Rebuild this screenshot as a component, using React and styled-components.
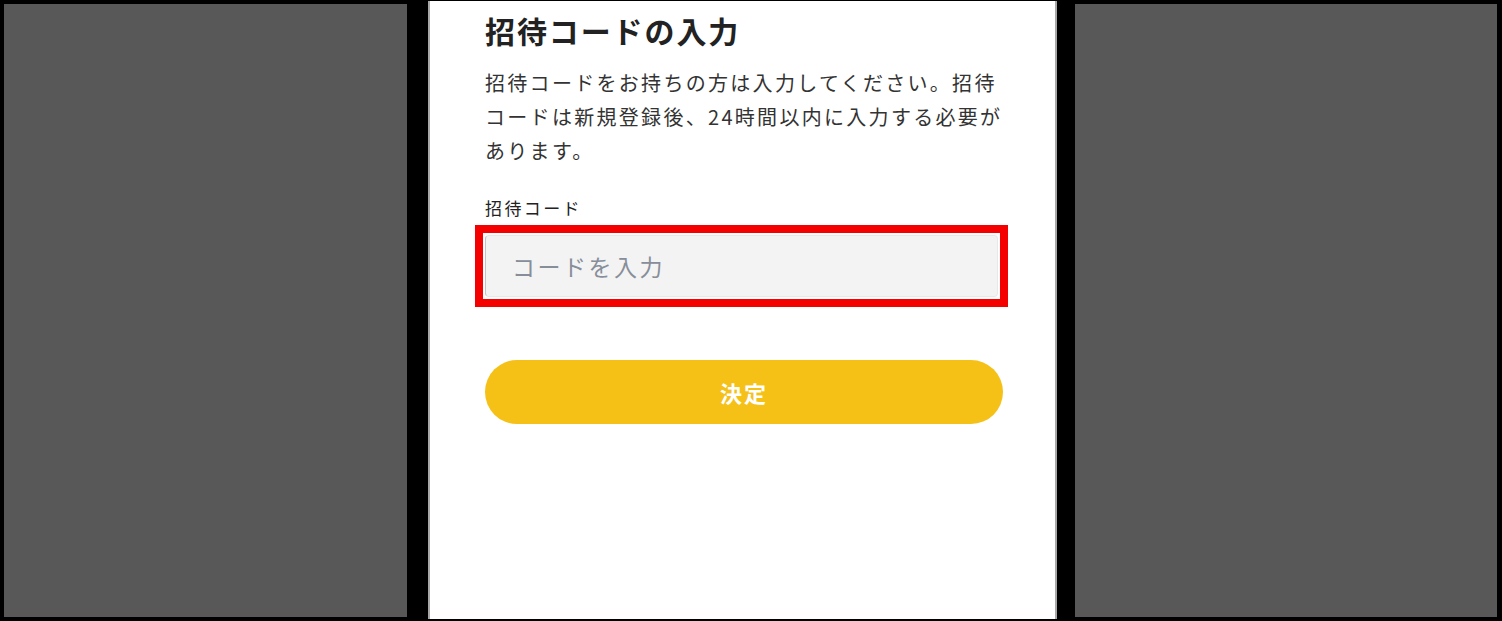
import React from 'react'
import styled, { createGlobalStyle } from 'styled-components'

const GlobalStyle = createGlobalStyle`
	html, body {
		margin: 0;
		padding: 0;
		background: #000;
	}
	body {
		font-family: 'Noto Sans CJK JP', 'Noto Sans', sans-serif;
	}
`

const Screen = styled.div`
	display: flex;
	align-items: flex-start;
	width: 1502px;
	height: 621px;
	overflow: hidden;
	background: #000;
`

const SidePanel = styled.div`
	width: ${({ width }) => width}px;
	height: 613px;
	margin-top: 4px;
	margin-left: ${({ left }) => left}px;
	background: #585858;
`

const Phone = styled.div`
	box-sizing: border-box;
	width: 629px;
	height: 618px;
	margin-top: 1px;
	margin-left: 21px;
	padding: 8px 0 0 55px;
	background: #fff;
	border-left: 2px solid #a8a8a8;
	border-right: 2px solid #a8a8a8;
`

const Content = styled.div`
	width: 518px;
	display: flex;
	flex-direction: column;
`

const Heading = styled.h1`
	margin: 0 0 15px;
	font-size: 30px;
	line-height: 42px;
	font-weight: 700;
	letter-spacing: 1.9px;
	color: #222;
`

const Description = styled.p`
	width: 524px;
	margin: 0 0 28px;
	font-size: 20px;
	line-height: 34px;
	letter-spacing: 2.3px;
	color: #333;
`

const Label = styled.label`
	font-size: 17px;
	line-height: 24px;
	letter-spacing: 2.4px;
	color: #222;
	margin-bottom: 5px;
`

const Highlight = styled.div`
	box-sizing: border-box;
	width: 533px;
	margin-left: -10px;
	padding: 2px;
	border: 8px solid #f50000;
	background: #fff;
`

const Input = styled.input`
	box-sizing: border-box;
	display: block;
	width: 100%;
	height: 62px;
	padding: 0 0 0 26px;
	border: 1px solid #e8e8e8;
	border-left-color: #c4c4c4;
	border-radius: 4px;
	background: #f3f3f4;
	font-family: inherit;
	font-size: 23px;
	letter-spacing: 2.5px;
	color: #333;
	outline: none;

	&::placeholder {
		color: #878e9a;
	}
`

const SubmitButton = styled.button`
	width: 518px;
	height: 64px;
	margin-top: 53px;
	border: none;
	border-radius: 32px;
	background: #f5c117;
	color: #fff;
	font-family: inherit;
	font-size: 22px;
	font-weight: 700;
	letter-spacing: 2px;
	cursor: pointer;
`

const App = () => {
	return (
		<>
			<GlobalStyle />
			<Screen>
				<SidePanel width={403} left={4} />
				<Phone>
					<Content>
						<Heading>招待コードの入力</Heading>
						<Description>
							招待コードをお持ちの方は入力してください。招待コードは新規登録後、24時間以内に入力する必要があります。
						</Description>
						<Label htmlFor='invite-code'>招待コード</Label>
						<Highlight>
							<Input id='invite-code' placeholder='コードを入力' />
						</Highlight>
						<SubmitButton>決定</SubmitButton>
					</Content>
				</Phone>
				<SidePanel width={422} left={18} />
			</Screen>
		</>
	)
}

export default App
